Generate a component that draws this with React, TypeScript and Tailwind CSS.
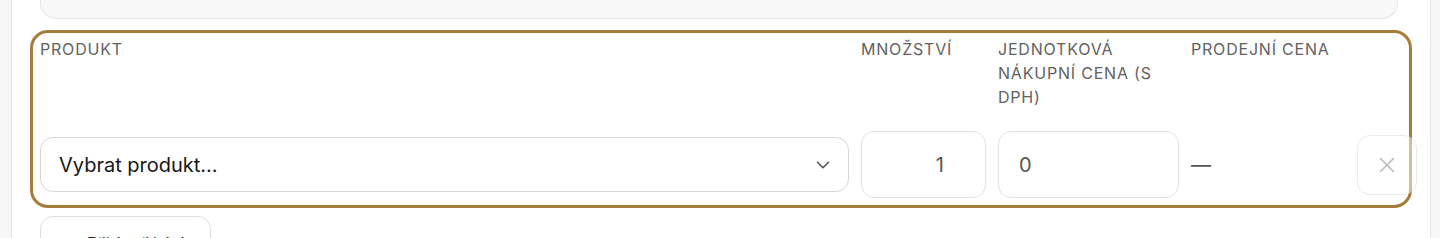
import { ChevronDown, Plus, X } from "lucide-react";

const labels = ["Produkt", "Množství", "Jednotková nákupní cena (s DPH)", "Prodejní cena", ""];

/** One order line in edit state: labels on top, inputs below, gold focus frame round it. */
function LineItem() {
  return (
    <div className="-ml-[10px] -mr-[14px] mt-[11px] rounded-[18px] border-[3px] border-[#a57d3a] px-[7px] pt-[4px] pb-[7px]">
      <div className="grid grid-cols-[809px_125px_181px_154px_60px] items-center gap-x-3 gap-y-[22px]">
        {labels.map((l, i) => (
          <div key={i} className="self-start text-[16px] uppercase leading-6 tracking-[0.05em] text-[#626262]">
            {l}
          </div>
        ))}

        <div className="flex h-[55px] items-center justify-between rounded-[13px] border border-[#d6d6d6] pl-[18px] pr-[14px] text-[20px] text-[#171717]">
          <span>Vybrat produkt...</span>
          <ChevronDown size={22} strokeWidth={1.75} className="text-[#555]" />
        </div>

        <div className="flex h-[67px] items-center justify-end rounded-[13px] border border-[#e3e3e3] pr-[41px] text-[20px] text-[#555]">
          1
        </div>

        <div className="flex h-[67px] items-center rounded-[13px] border border-[#e3e3e3] pl-[20px] text-[20px] text-[#555]">
          0
        </div>

        <div className="text-[20px] text-[#555]">—</div>

        <button
          type="button"
          className="flex h-[60px] w-[60px] items-center justify-center rounded-[13px] border border-[#d9d9d9] bg-white opacity-50"
        >
          <X size={26} strokeWidth={1.4} className="text-[#777]" />
        </button>
      </div>
    </div>
  );
}

export default function App() {
  return (
    <div className="h-[238px] overflow-hidden bg-[#f6f6f6] font-['Inter',sans-serif]">
      <div className="ml-[11px] mr-[9px] h-full border-x border-[#e6e6e6] bg-white pl-[28px] pr-[32px]">
        <div className="h-[19px] rounded-b-2xl border-x border-b border-[#e6e6e6] bg-[#f8f8f8]" />

        <LineItem />

        <button
          type="button"
          className="mt-2 flex h-[56px] w-[171px] items-center justify-center gap-2 whitespace-nowrap rounded-[13px] border border-[#dedede] text-[18px] text-[#1c1c1c]"
        >
          <Plus size={18} />
          Přidat řádek
        </button>
      </div>
    </div>
  );
}
